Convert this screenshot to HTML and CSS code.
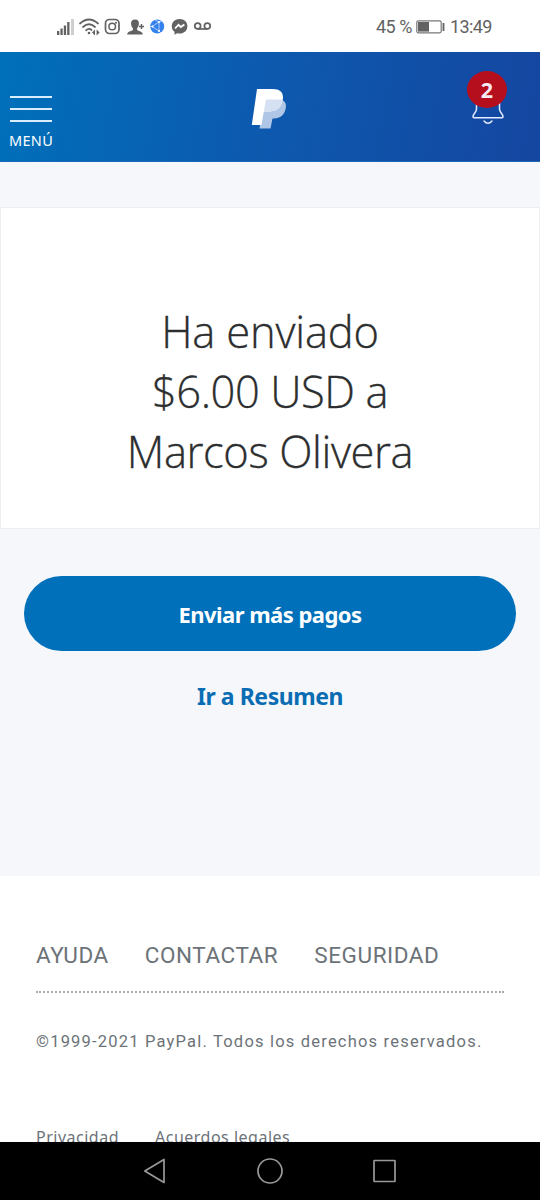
FILE: index.html
```html
<!DOCTYPE html>
<html lang="es">
<head>
<meta charset="utf-8">
<meta name="viewport" content="width=device-width">
<title>PayPal</title>
<link rel="stylesheet" href="styles.css">
</head>
<body>
<div class="screen">
  <div class="status">
    <svg class="status-icons" width="160" height="24" viewBox="54 15 160 24">
      <g fill="#626262">
        <rect x="57" y="31" width="2.3" height="4"/><rect x="60.4" y="28.5" width="2.3" height="6.5"/><rect x="63.8" y="25.5" width="2.3" height="9.5"/><rect x="67.2" y="22" width="2.3" height="13"/>
        <rect x="71" y="19" width="3" height="16" fill="#cfcfcf"/>
      </g>
      <g fill="none" stroke="#626262" stroke-width="1.7" stroke-linecap="round">
        <path d="M80 23.500Q89 15.500 98 23.500M83 27Q89 21.500 95 27M86 30.300Q89 27.700 91.500 30"/>
      </g>
      <circle cx="89" cy="33" r="1.3" fill="#626262"/>
      <path d="M95 29.500v6l-3-3zM96.600 29.500v6l3-3z" fill="#626262"/>
      <rect x="105.5" y="19.5" width="13.5" height="14" rx="4" fill="none" stroke="#626262" stroke-width="1.7"/>
      <circle cx="112.2" cy="26.5" r="3.3" fill="none" stroke="#626262" stroke-width="1.5"/><circle cx="116" cy="22.7" r="1" fill="#626262"/>
      <path d="M135 19.5c-3 0-4.2 2-3.9 4.4.2 2 .9 3.3 1.8 4.4v1.6c-1.6 1.2-5.7 1.4-5.7 4.6h15.6c0-3.2-4.1-3.4-5.7-4.6v-1.6c.9-1.1 1.6-2.400 1.8-4.400.3-2.400-.9-4.400-3.900-4.400z" fill="#626262"/>
      <path d="M141.500 24v5M139 26.500h5" stroke="#626262" stroke-width="1.500"/>
      <circle cx="157.200" cy="26.500" r="7" fill="#3381ec"/>
      <path d="M152 26.500l7-4.500v9zM159 22l3-1M159 31l2 2M152 26.500h-2M159 22l-4-2" fill="none" stroke="#c9e0ff" stroke-width=".8"/>
      <circle cx="152.500" cy="26.500" r="1" fill="#fff"/><circle cx="159" cy="22" r="1" fill="#fff"/><circle cx="159" cy="31" r="1" fill="#fff"/>
      <path d="M179.600 19c-4.600 0-7.800 3.100-7.800 7.200 0 2.300 1 4.300 2.700 5.600v2.900l2.600-1.500c.8.200 1.600.3 2.500.3 4.600 0 7.800-3.100 7.800-7.300s-3.200-7.200-7.800-7.200z" fill="#626262"/>
      <path d="M175 28.500l3.500-3.700 2.300 2.200 3.600-2.600" fill="none" stroke="#fff" stroke-width="1.800"/>
      <g fill="none" stroke="#626262" stroke-width="1.700"><circle cx="197.700" cy="26" r="2.900"/><circle cx="207.300" cy="26" r="2.900"/><path d="M197.700 29h9.600"/></g>
    </svg>
    <div class="status-right">
      <span class="percent">45 %</span>
      <svg width="29" height="14" viewBox="0 0 29 14"><rect x=".8" y=".8" width="24.400" height="12" rx="1.500" fill="none" stroke="#777" stroke-width="1.200"/><rect x="2" y="2" width="11" height="9.600" fill="#626262"/><rect x="26.600" y="3" width="1.800" height="8" fill="#626262"/></svg>
      <span class="clock">13:49</span>
    </div>
  </div>
  <header class="header">
    <div class="menu"><i></i><i></i><i></i><span>MENÚ</span></div>
    <svg class="logo" width="36" height="42" viewBox="0 0 36 42">
      <path d="M13 11.500H28C33 11.500 36 15 34.700 20.500 33.500 27 29 30.500 23 30.500H21.500L19.500 40.500H8.500z" fill="#b0c6e6"/>
      <path d="M6 1H22C29.500 1 33 5 31.700 12 30 20 25.500 23.500 18 23.500H12.800L10.500 37H.800z" fill="#fff"/>
      <path d="M15 11.500H31.700C30 20 25.500 23.500 18 23.500H12.800z" fill="#d5e1f2"/>
    </svg>
    <div class="bell">
      <svg width="34" height="48" viewBox="0 0 34 48" fill="none" stroke="#e4edff" stroke-width="1.500" stroke-linecap="round" stroke-linejoin="round"><path d="M5.500 28V36C5.500 40 2 40.500 2 43.800Q2 44.700 3 44.700H31Q32 44.700 32 43.800C32 40.500 28.500 40 28.500 36V28M13 48Q17 52.500 21 48"/></svg>
      <span class="badge">2</span>
    </div>
  </header>
  <main class="main">
    <section class="card">
      <h1><span class="l1">Ha enviado</span><span class="l2">$6.00 USD a</span><span class="l3">Marcos Olivera</span></h1>
    </section>
    <a class="button"><span>Enviar más pagos</span></a>
    <a class="link"><span>Ir a Resumen</span></a>
  </main>
  <footer class="footer">
    <nav class="nav"><a>AYUDA</a><a>CONTACTAR</a><a>SEGURIDAD</a></nav>
    <p class="copy">©1999-2021 PayPal. Todos los derechos reservados.</p>
    <div class="legal"><a>Privacidad</a><a>Acuerdos legales</a></div>
  </footer>
  <div class="navbar">
    <svg width="24" height="28" viewBox="0 0 24 28"><path d="M21 2.500V25.500L1.800 14z"/></svg>
    <svg width="28" height="28" viewBox="0 0 28 28"><circle cx="14" cy="14" r="12"/></svg>
    <svg width="24" height="24" viewBox="0 0 24 24"><rect x="1" y="1.500" width="21" height="21" rx=".5"/></svg>
  </div>
</div>
</body>
</html>
```
FILE: styles.css
```css
* { box-sizing: border-box; }
body { margin: 0; background: #fff; font-family: "Noto Sans", "Open Sans", sans-serif; }
.screen { width: 540px; height: 1200px; display: flex; flex-direction: column; overflow: hidden; }
svg { display: block; flex: none; }

.status { height: 52px; flex: none; padding: 15px 48px 0 54px; display: flex; justify-content: space-between; align-items: flex-start; background: #fff; }
.status-right { display: flex; align-items: center; height: 24px; font: 18px/24px Roboto, sans-serif; color: #626262; white-space: nowrap; }
.percent { width: 40px; letter-spacing: -0.5px; }
.clock { width: 42px; margin-left: 5px; letter-spacing: -0.6px; }

.header { height: 110px; flex: none; display: flex; justify-content: space-between; align-items: flex-start; padding: 0 33px 0 9px; background: linear-gradient(100deg, #0070ba 0%, #0c5bb0 45%, #1546a0 100%); border-bottom: 1px solid #1b68b4; }
.menu { width: 46px; padding-top: 44px; display: flex; flex-direction: column; gap: 10.500px; color: #fff; }
.menu i { width: 42px; height: 1.500px; margin-left: 1px; background: #d9edff; }
.menu span { font-size: 14.500px; line-height: 18px; margin-top: -1px; letter-spacing: .3px; }
.logo { margin: 36px 0 0 14px; }
.bell { position: relative; width: 38px; padding: 21px 0 0 2px; }
.bell svg { overflow: visible; }
.badge { position: absolute; left: -2px; top: 19px; width: 40px; height: 37px; border-radius: 50%; background: #b50e1d; color: #f7e9f4; font: 700 21.500px/38px "Noto Sans", sans-serif; text-align: center; }

.main { height: 714px; flex: none; background: #f5f7fb; padding-top: 45px; display: flex; flex-direction: column; }
.card { height: 322px; border: 1px solid #eceef0; background: #fff; padding-top: 94px; }
h1 { margin: 0; font: 300 43.500px/60px "Open Sans", "Noto Sans", sans-serif; color: #2c2e2f; -webkit-text-stroke: .3px #2c2e2f; display: flex; flex-direction: column; align-items: center; white-space: nowrap; }
.l1 { letter-spacing: -.2px; }
.l2 { letter-spacing: -.45px; }
.l3 { letter-spacing: -.4px; }
.button { height: 75px; margin: 47px 24px 0; border-radius: 37.500px; background: #0070ba; color: #fff; font-size: 22px; font-weight: 700; line-height: 77px; letter-spacing: -.55px; text-align: center; }
.link { margin-top: 29px; color: #0a6db3; font-size: 23px; font-weight: 700; line-height: 32px; letter-spacing: -.45px; text-align: center; }

.footer { flex: none; height: 266px; padding: 64px 36px 0; overflow: hidden; color: #6c7378; background: #fff; }
.nav { height: 53px; display: flex; gap: 36px; font: 22.500px/31px Roboto, sans-serif; letter-spacing: .57px; border-bottom: 2px dotted #a8abae; }
.copy { margin: 35px 0 0; font: 16.500px/28px Roboto, sans-serif; letter-spacing: 1.200px; white-space: nowrap; }
.legal { display: flex; gap: 36px; margin-top: 69px; font-size: 16px; line-height: 24px; letter-spacing: .5px; white-space: nowrap; }

.navbar { flex: none; height: 58px; padding: 0 143px; background: #000; display: flex; justify-content: space-between; align-items: center; }
.navbar svg { fill: none; stroke: #999; stroke-width: 1.700; stroke-linejoin: round; }
```
